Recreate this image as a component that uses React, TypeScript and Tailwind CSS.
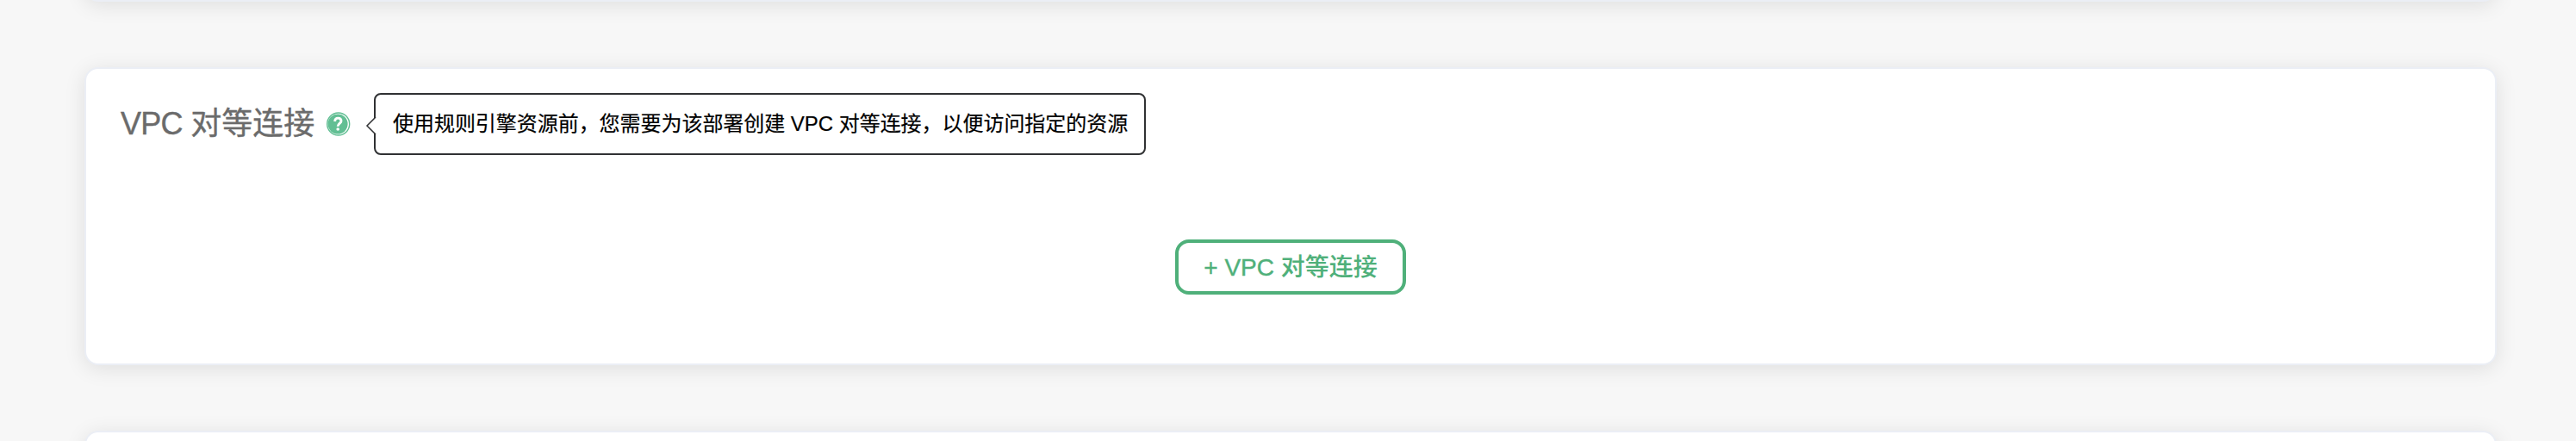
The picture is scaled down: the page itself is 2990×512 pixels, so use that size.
import type { ReactNode } from "react";

function Card({ children }: { children?: ReactNode }) {
  return (
    <section className="h-[346px] w-[2800px] shrink-0 rounded-[16px] border-2 border-[#ebeef5] bg-white shadow-[0_4px_24px_rgba(0,0,0,0.1)]">
      {children}
    </section>
  );
}

function HelpIcon() {
  return (
    <svg className="ml-[13px] mt-[50px] h-7 w-7 shrink-0" viewBox="0 0 28 28" fill="none">
      <circle cx="13.7" cy="14" r="13" stroke="#62bf94" strokeWidth="1.4" />
      <circle cx="13.1" cy="14" r="11.5" fill="#62bf94" />
      <path
        d="M9.7 10.9C9.7 8.4 11.3 7.1 13.3 7.1C15.5 7.1 17 8.4 17 10.4C17 13.1 13.2 13.1 13.2 16.8"
        stroke="white"
        strokeWidth="2.9"
      />
      <circle cx="13.2" cy="20" r="1.8" fill="white" />
    </svg>
  );
}

function Hint({ children }: { children: ReactNode }) {
  return (
    <div className="relative ml-[27px] mt-[28px] flex h-[72px] w-[896px] shrink-0 items-center rounded-[8px] border-2 border-[#303133] bg-white pl-[20px] text-[24px] tracking-[-0.04px] whitespace-nowrap text-black [-webkit-text-stroke:0.2px]">
      <svg className="absolute top-[25px] -left-[12px] h-[22px] w-[14px]" viewBox="0 0 14 22">
        <path d="M12 1L2 11L12 21H14V1Z" fill="white" />
        <path d="M12 1L2 11L12 21" fill="none" stroke="#303133" strokeWidth="1.5" />
      </svg>
      {children}
    </div>
  );
}

export default function App() {
  return (
    <main className="flex h-[512px] w-[2990px] flex-col gap-[76px] overflow-hidden bg-[#f7f7f7] pl-[98px] font-['Liberation_Sans','Noto_Sans_CJK_SC',sans-serif]">
      <div className="-mt-[344px]">
        <Card />
      </div>
      <Card>
        <header className="flex h-[128px] items-start pl-[40px]">
          <h2 className="mt-[38px] w-[226px] shrink-0 text-[36px] leading-[52px] whitespace-nowrap text-[#6b6b6b] [-webkit-text-stroke:0.4px]">
            <span className="tracking-[-0.7px]">VPC </span>对等连接
          </h2>
          <HelpIcon />
          <Hint>使用规则引擎资源前，您需要为该部署创建 VPC 对等连接，以便访问指定的资源</Hint>
        </header>
        <div className="flex justify-center pt-[70px]">
          <button className="flex h-[64px] w-[268px] items-center justify-center rounded-[16px] border-4 border-[#4fb07a] pt-0.5 text-[28px] font-medium whitespace-pre text-[#4fb07a]">
            <span className="[-webkit-text-stroke:0.4px]">+ VPC </span>
            <span className="[-webkit-text-stroke:0.1px]">对等连接</span>
          </button>
        </div>
      </Card>
      <Card />
    </main>
  );
}
